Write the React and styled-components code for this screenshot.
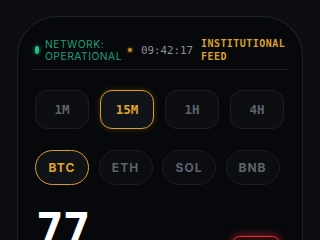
import React from 'react';
import styled, { createGlobalStyle } from 'styled-components';

const Global = createGlobalStyle`
  html, body {
    margin: 0;
    background: #0c0e12;
    overflow: hidden;
  }
`;

const timeframes = ['1M', '15M', '1H', '4H'];
const assets = ['BTC', 'ETH', 'SOL', 'BNB'];

export default function App() {
  return (
    <>
      <Global />
      <Page>
        <Device>
          <Header>
            <StatusDot />
            <Network>NETWORK:<br />OPERATIONAL</Network>
            <PulseDot />
            <Clock>09:42:17</Clock>
            <Feed>INSTITUTIONAL<br />FEED</Feed>
          </Header>
          <Divider />
          <Timeframes>
            {timeframes.map(t => (
              <TimeButton key={t} active={t === '15M'}>{t}</TimeButton>
            ))}
          </Timeframes>
          <Assets>
            {assets.map(a => (
              <AssetPill key={a} active={a === 'BTC'}>{a}</AssetPill>
            ))}
          </Assets>
          <ScoreRow>
            <Score>77</Score>
            <Signal />
          </ScoreRow>
        </Device>
      </Page>
    </>
  );
}

const Page = styled.div`
  height: 240px;
  padding: 16px 17px 0;
  box-sizing: border-box;
  overflow: hidden;
`;

const Device = styled.div`
  height: 260px;
  box-sizing: border-box;
  background: #07080b;
  border: 1.5px solid #1d2026;
  border-bottom: none;
  border-radius: 40px 40px 0 0;
  padding: 20px 14px 0;
`;

const Header = styled.div`
  display: flex;
  align-items: center;
  padding: 0 3px;
  height: 26px;
`;

const StatusDot = styled.span`
  width: 4px;
  height: 8px;
  border-radius: 50%;
  background: #22c58a;
  box-shadow: 0 0 4px #1fb07c;
  flex-shrink: 0;
`;

const Network = styled.div`
  margin-left: 6px;
  font-family: Inter, "Noto Sans", sans-serif;
  font-size: 10.3px;
  line-height: 12px;
  letter-spacing: 0.5px;
  color: #1f9f75;
`;

const PulseDot = styled.span`
  width: 4px;
  height: 4px;
  border-radius: 50%;
  margin-left: 6px;
  background: #c98a2c;
  box-shadow: 0 0 3px #b07a22;
  flex-shrink: 0;
`;

const Clock = styled.div`
  margin-left: 9px;
  font-family: "DejaVu Sans Mono", monospace;
  font-size: 10.8px;
  color: #8d929b;
`;

const Feed = styled.div`
  margin-left: 8px;
  font-family: "DejaVu Sans Mono", monospace;
  font-weight: bold;
  font-size: 10px;
  line-height: 13px;
  letter-spacing: 0.45px;
  color: #d9a02b;
`;

const Divider = styled.div`
  height: 1px;
  margin-top: 6px;
  background: #1a1d22;
`;

const Timeframes = styled.div`
  display: grid;
  grid-template-columns: repeat(4, 54px);
  gap: 11px;
  padding: 0 3px;
  margin-top: 20px;
`;

const TimeButton = styled.div`
  height: 39px;
  box-sizing: border-box;
  display: flex;
  align-items: center;
  justify-content: center;
  border-radius: 12px;
  border: ${p => (p.active ? '1.5px solid #dc9d25' : '1px solid #1a1d23')};
  background: ${p => (p.active ? '#10131a' : '#0c0e12')};
  box-shadow: ${p => (p.active ? '0 0 6px rgba(220,157,37,0.25)' : 'none')};
  font-family: "DejaVu Sans Mono", monospace;
  font-weight: bold;
  font-size: 12.5px;
  color: ${p => (p.active ? '#e0a52a' : '#5d636d')};
`;

const Assets = styled.div`
  display: grid;
  grid-template-columns: repeat(4, 54px);
  gap: 9.5px;
  padding: 0 3px;
  margin-top: 21px;
`;

const AssetPill = styled.div`
  height: 35px;
  box-sizing: border-box;
  display: flex;
  align-items: center;
  justify-content: center;
  border-radius: 18px;
  border: ${p => (p.active ? '1.5px solid #dc9d25' : '1px solid #1a1d23')};
  background: ${p => (p.active ? '#0f1217' : '#0b0d11')};
  font-family: Inter, "Noto Sans", sans-serif;
  font-weight: 700;
  font-size: 12px;
  letter-spacing: 1px;
  color: ${p => (p.active ? '#e0a52a' : '#5d636d')};
`;

const ScoreRow = styled.div`
  display: flex;
  justify-content: space-between;
  padding: 0 4px 0 4px;
  margin-top: 22px;
`;

const Score = styled.div`
  font-family: "DejaVu Sans Mono", monospace;
  font-weight: bold;
  font-size: 46px;
  line-height: 46px;
  letter-spacing: -1px;
  color: #ffffff;
`;

const Signal = styled.div`
  width: 46px;
  height: 24px;
  margin-top: 29px;
  margin-right: 4px;
  border-radius: 8px;
  border: 1.5px solid #e0303a;
  background: #2a0b0e;
  box-shadow: 0 0 8px rgba(230, 40, 50, 0.7);
`;
